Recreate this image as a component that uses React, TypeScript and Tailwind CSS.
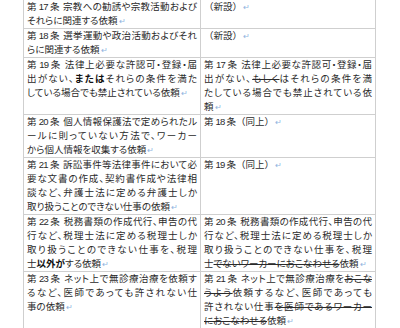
import React from "react";

const R = () => <span className="text-[#8fb4e0] text-[8px] ml-[1px]">↵</span>;
const B = ({ children }: { children: React.ReactNode }) => <span className="font-bold text-[#111]">{children}</span>;
const S = ({ children }: { children: React.ReactNode }) => <span className="line-through">{children}</span>;
// full-width brackets, no proportional spacing
const F = ({ children }: { children: React.ReactNode }) => <span className="[font-feature-settings:normal]">{children}</span>;
// 第 NN 条 prefix with narrow digits
const P = ({ n, gap = true }: { n: number; gap?: boolean }) => (
  <>
    第<span className="inline-block mx-[2px] tracking-[-0.8px]">{n}</span>条
    {gap ? <span className="inline-block w-[3px]" /> : null}
  </>
);

type Line = { c: React.ReactNode; last?: boolean };

function Cell({ lines, left }: { lines: Line[]; left?: boolean }) {
  return (
    <div className={left ? "w-[177px] shrink-0 border-r border-[#cfcfcf] px-[3px]" : "flex-1 px-[3px]"}>
      {lines.map((l, i) => (
        <div
          key={i}
          className={`whitespace-nowrap h-[14px] ${l.last ? "text-left" : "text-justify [text-align-last:justify]"}`}
        >
          {l.c}
        </div>
      ))}
    </div>
  );
}

function Row({ left, right }: { left: Line[]; right: Line[] }) {
  return (
    <div className="flex border-b border-[#cfcfcf]">
      <Cell left lines={left} />
      <Cell lines={right} />
    </div>
  );
}

export default function App() {
  return (
    <div lang="ja" className="w-[400px] h-[328px] bg-white overflow-hidden">
      <div
        className="ml-[23px] w-[353px] border-l border-r border-[#cfcfcf] text-[9.5px] leading-[14px] text-[#2a2a2a] [font-feature-settings:'palt']"
        style={{ fontFamily: '"Liberation Sans", "Noto Sans CJK JP", sans-serif' }}
      >
        <Row
          left={[
            { c: <><P n={17} />宗教への勧誘や宗教活動および</> },
            { c: <>それらに関連する依頼<R /></>, last: true },
          ]}
          right={[{ c: <><F>（新設）</F><R /></>, last: true }, { c: "", last: true }]}
        />
        <Row
          left={[
            { c: <><P n={18} />選挙運動や政治活動およびそれ</> },
            { c: <>らに関連する依頼<R /></>, last: true },
          ]}
          right={[{ c: <><F>（新設）</F><R /></>, last: true }, { c: "", last: true }]}
        />
        <Row
          left={[
            { c: <><P n={19} />法律上必要な許認可・登録・届</> },
            { c: <>出がない、<B>または</B>それらの条件を満た</> },
            { c: <>している場合でも禁止されている依頼<R /></>, last: true },
          ]}
          right={[
            { c: <><P n={17} />法律上必要な許認可・登録・届</> },
            { c: <>出がない、<S>もしく</S>はそれらの条件を満</> },
            { c: "たしている場合でも禁止されている依" },
            { c: <>頼<R /></>, last: true },
          ]}
        />
        <Row
          left={[
            { c: <><P n={20} />個人情報保護法で定められたル</> },
            { c: "ールに則っていない方法で、ワーカー" },
            { c: <>から個人情報を収集する依頼<R /></>, last: true },
          ]}
          right={[{ c: <><P n={18} gap={false} /><F>（同上）</F><R /></>, last: true }]}
        />
        <Row
          left={[
            { c: <><P n={21} />訴訟事件等法律事件において必</> },
            { c: "要な文書の作成、契約書作成や法律相" },
            { c: "談など、弁護士法に定める弁護士しか" },
            { c: <>取り扱うことのできない仕事の依頼<R /></>, last: true },
          ]}
          right={[{ c: <><P n={19} gap={false} /><F>（同上）</F><R /></>, last: true }]}
        />
        <Row
          left={[
            { c: <><P n={22} />税務書類の作成代行、申告の代</> },
            { c: "行など、税理士法に定める税理士しか" },
            { c: "取り扱うことのできない仕事を、税理" },
            { c: <>士<B>以外が</B>する依頼<R /></>, last: true },
          ]}
          right={[
            { c: <><P n={20} />税務書類の作成代行、申告の代</> },
            { c: "行など、税理士法に定める税理士しか" },
            { c: "取り扱うことのできない仕事を、税理" },
            { c: <>士<S>でないワーカーにおこなわせる</S>依頼<R /></>, last: true },
          ]}
        />
        <Row
          left={[
            { c: <><P n={23} />ネット上で無診療治療を依頼す</> },
            { c: "るなど、医師であっても許されない仕" },
            { c: <>事の依頼<R /></>, last: true },
          ]}
          right={[
            { c: <><P n={21} />ネット上で無診療治療を<S>おこな</S></> },
            { c: <><S>うよう</S>依頼するなど、医師であっても</> },
            { c: <>許されない仕事<S>を医師であるワーカー</S></> },
            { c: <><S>におこなわせる</S>依頼<R /></>, last: true },
          ]}
        />
      </div>
    </div>
  );
}
